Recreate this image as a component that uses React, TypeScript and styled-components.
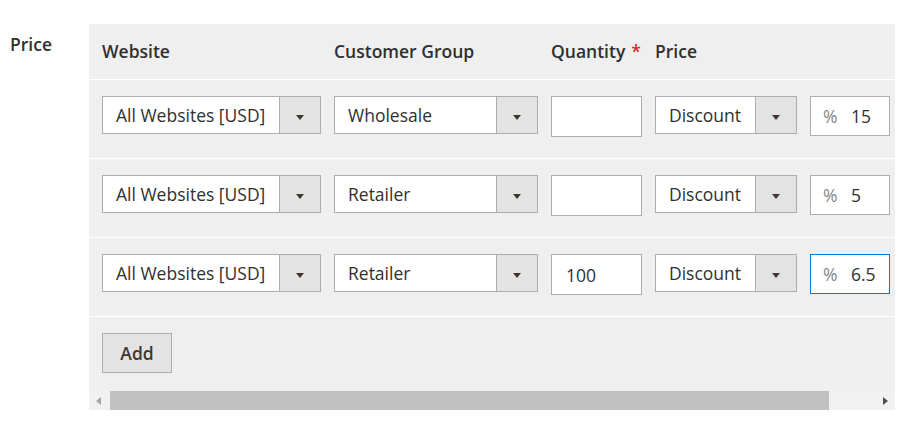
import React from "react";
import styled, { createGlobalStyle } from "styled-components";

const GlobalStyle = createGlobalStyle`
  html, body {
    margin: 0;
    padding: 0;
    background: #ffffff;
  }
  body {
    font-family: "Open Sans", "Noto Sans", sans-serif;
    font-size: 17.5px;
    color: #303030;
  }
  * { box-sizing: border-box; }
`;

const Page = styled.div`
  display: flex;
  align-items: flex-start;
  padding-top: 24px;
`;

const FieldLabel = styled.div`
  width: 89px;
  flex: none;
  padding-left: 10px;
  padding-top: 9px;
  font-weight: 600;
  line-height: 1.362;
`;

const Panel = styled.div`
  width: 806px;
  flex: none;
  background: #efefef;
  overflow: hidden;
`;

const Grid = styled.div`
  display: grid;
  grid-template-columns: 219px 204px 91px 142px 80px 80px;
  column-gap: 13px;
  padding-left: 13px;
  width: 1000px;
`;

const HeaderRow = styled(Grid)`
  height: 56px;
  align-items: center;
  border-bottom: 1px solid #ffffff;
`;

const HeaderCell = styled.div<{ $span?: number }>`
  font-weight: 600;
  line-height: 1.362;
  white-space: nowrap;
  grid-column: span ${(p) => p.$span ?? 1};
`;

const Required = styled.span`
  color: #e22626;
  margin-left: 6px;
`;

const Row = styled(Grid)`
  height: 79px;
  padding-top: 16px;
  align-items: start;
  border-bottom: 1px solid #ffffff;
`;

const SelectBox = styled.div`
  display: flex;
  height: 38px;
  border: 1px solid #adadad;
  background: #ffffff;
`;

const SelectText = styled.div`
  flex: 1;
  display: flex;
  align-items: center;
  padding: 2px 0 0 13px;
  white-space: nowrap;
  overflow: hidden;
  line-height: 1;
  color: #303030;
`;

const SelectArrow = styled.div`
  width: 41px;
  flex: none;
  background: #e3e3e3;
  border-left: 1px solid #adadad;
  display: flex;
  align-items: center;
  justify-content: center;
  padding-top: 4px;
  &::after {
    content: "";
    width: 0;
    height: 0;
    border-left: 4.5px solid transparent;
    border-right: 4.5px solid transparent;
    border-top: 5.5px solid #41362f;
  }
`;

const TextInput = styled.input`
  display: block;
  width: 100%;
  height: 41px;
  margin: 0;
  border: 1px solid #adadad;
  background: #ffffff;
  padding: 0 14px;
  font-family: "Open Sans", "Noto Sans", sans-serif;
  font-size: 17.5px;
  color: #303030;
  outline: none;
`;

const AddonBox = styled.div<{ $focused?: boolean }>`
  display: flex;
  align-items: center;
  height: 40px;
  border: 1px solid ${(p) => (p.$focused ? "#007bdb" : "#adadad")};
  background: #ffffff;
  padding-left: 12px;
  white-space: nowrap;
`;

const Addon = styled.span`
  color: #858585;
  width: 28px;
  flex: none;
`;

const AddonValue = styled.span`
  color: #303030;
`;

const AddRow = styled.div`
  height: 74px;
  padding: 16px 0 0 13px;
`;

const AddButton = styled.button`
  width: 70px;
  height: 40px;
  margin: 0;
  padding: 0;
  background: #e3e3e3;
  border: 1px solid #adadad;
  font-family: "Open Sans", "Noto Sans", sans-serif;
  font-size: 17.5px;
  font-weight: 600;
  color: #41362f;
`;

const ScrollBar = styled.div`
  display: flex;
  height: 19px;
  background: #f1f1f1;
`;

const ScrollButton = styled.div<{ $dir: "left" | "right"; $w: number }>`
  width: ${(p) => p.$w}px;
  flex: none;
  display: flex;
  align-items: center;
  justify-content: center;
  &::after {
    content: "";
    width: 0;
    height: 0;
    border-top: 4.5px solid transparent;
    border-bottom: 4.5px solid transparent;
    ${(p) =>
      p.$dir === "left"
        ? "border-right: 5px solid #a3a3a3; margin-left: -2px;"
        : "border-left: 5px solid #505050; margin-left: 0px;"}
  }
`;

const ScrollThumb = styled.div`
  width: 719px;
  flex: none;
  background: #c1c1c1;
`;

const ScrollTrack = styled.div`
  flex: 1;
`;

type Tier = {
  website: string;
  group: string;
  qty: string;
  type: string;
  value: string;
  focused?: boolean;
};

const tiers: Tier[] = [
  { website: "All Websites [USD]", group: "Wholesale", qty: "", type: "Discount", value: "15" },
  { website: "All Websites [USD]", group: "Retailer", qty: "", type: "Discount", value: "5" },
  { website: "All Websites [USD]", group: "Retailer", qty: "100", type: "Discount", value: "6.5", focused: true },
];

const Select = ({ value }: { value: string }) => (
  <SelectBox>
    <SelectText>{value}</SelectText>
    <SelectArrow />
  </SelectBox>
);

export default function App() {
  return (
    <>
      <GlobalStyle />
      <Page>
        <FieldLabel>Price</FieldLabel>
        <Panel>
          <HeaderRow>
            <HeaderCell>Website</HeaderCell>
            <HeaderCell>Customer Group</HeaderCell>
            <HeaderCell>
              Quantity<Required>*</Required>
            </HeaderCell>
            <HeaderCell $span={2}>Price</HeaderCell>
          </HeaderRow>
          {tiers.map((t, i) => (
            <Row key={i}>
              <Select value={t.website} />
              <Select value={t.group} />
              <TextInput defaultValue={t.qty} readOnly />
              <Select value={t.type} />
              <AddonBox $focused={t.focused}>
                <Addon>%</Addon>
                <AddonValue>{t.value}</AddonValue>
              </AddonBox>
            </Row>
          ))}
          <AddRow>
            <AddButton type="button">Add</AddButton>
          </AddRow>
          <ScrollBar>
            <ScrollButton $dir="left" $w={21} />
            <ScrollThumb />
            <ScrollTrack />
            <ScrollButton $dir="right" $w={19} />
          </ScrollBar>
        </Panel>
      </Page>
    </>
  );
}
